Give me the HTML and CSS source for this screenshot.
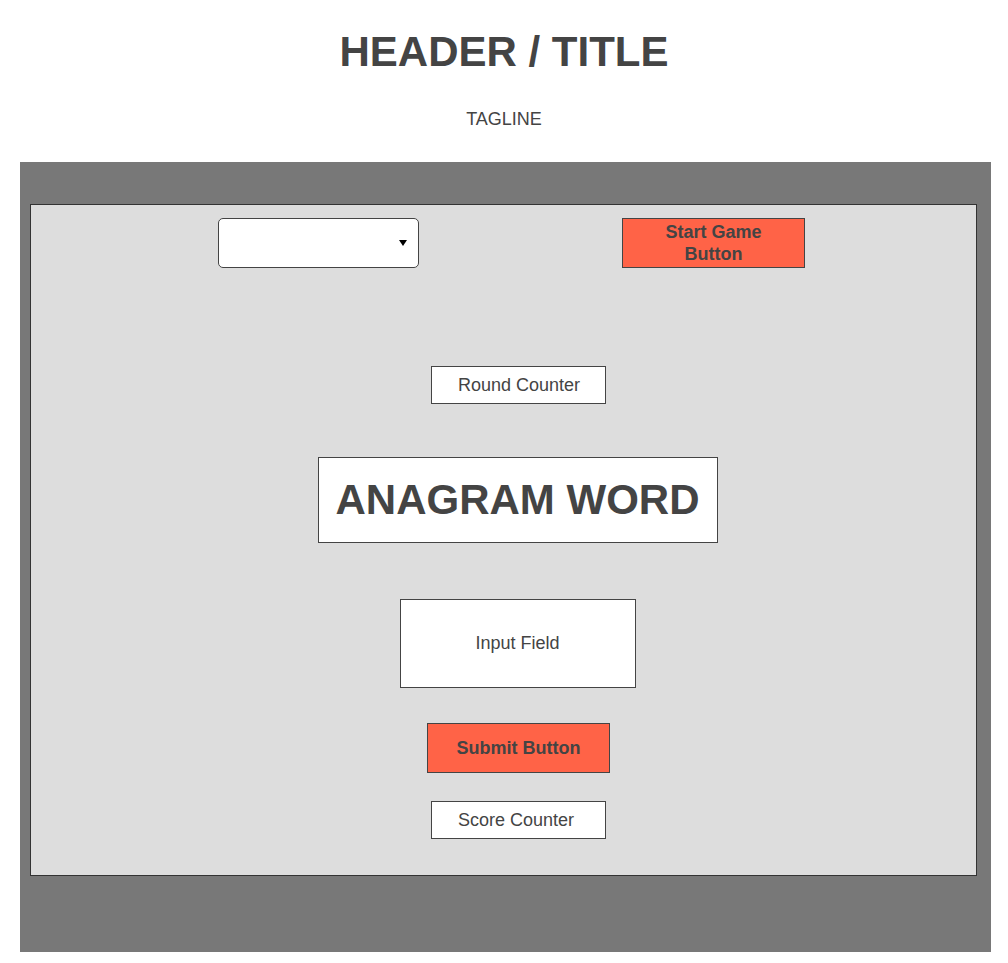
FILE: index.html
```html
<!DOCTYPE html>
<html lang="en">
<head>
<meta charset="utf-8">
<title>Anagram Game</title>
<link rel="stylesheet" href="styles.css">
</head>
<body>
<header class="page-header">
  <h1 class="title">HEADER / TITLE</h1>
  <p class="tagline">TAGLINE</p>
</header>
<main class="stage">
  <section class="game">
    <div class="controls">
      <div class="select-box"><span class="caret"></span></div>
      <button class="btn btn-start">Start Game Button</button>
    </div>
    <div class="play">
      <div class="counter counter-round">Round Counter</div>
      <div class="word">ANAGRAM WORD</div>
      <div class="input-field">Input Field</div>
      <button class="btn btn-submit">Submit Button</button>
      <div class="counter counter-score">Score Counter</div>
    </div>
  </section>
</main>
</body>
</html>
```

FILE: styles.css
```css
* { box-sizing: border-box; }
html, body { margin: 0; padding: 0; background: #fff; }
body {
  font-family: "Liberation Sans", Arial, sans-serif;
  color: #444;
  width: 1008px;
}
.page-header {
  display: flex;
  flex-direction: column;
  align-items: center;
  padding-top: 28px;
}
.title {
  margin: 0;
  font-size: 42px;
  line-height: 48px;
  font-weight: bold;
  color: #444;
}
.tagline {
  margin: 33px 0 0;
  font-size: 18px;
  line-height: 20px;
  color: #444;
}
.stage {
  margin: 33px 17px 0 20px;
  height: 790px;
  background: #787878;
  padding: 42px 14px 0 10px;
}
.game {
  height: 672px;
  background: #dddddd;
  border: 1px solid #333;
  display: flex;
  flex-direction: column;
}
.controls {
  display: flex;
  align-items: center;
  padding: 13px 0 0 187px;
  gap: 203px;
}
.select-box {
  width: 201px;
  height: 50px;
  background: #fff;
  border: 1px solid #444;
  border-radius: 5px;
  display: flex;
  align-items: center;
  justify-content: flex-end;
  padding-right: 11px;
}
.caret {
  width: 0;
  height: 0;
  border-left: 4px solid transparent;
  border-right: 4px solid transparent;
  border-top: 6px solid #000;
  margin-top: 0;
}
.btn {
  font-family: "Liberation Sans", Arial, sans-serif;
  font-weight: bold;
  font-size: 18px;
  line-height: 22px;
  color: #444;
  background: #ff6347;
  border: 1px solid #444;
  width: 183px;
  height: 50px;
  padding: 0 14px;
  margin: 0;
  border-radius: 0;
}
.play {
  display: flex;
  flex-direction: column;
  align-items: center;
  padding-left: 30px;
}
.counter {
  width: 175px;
  height: 38px;
  background: #fff;
  border: 1px solid #444;
  font-size: 18px;
  display: flex;
  align-items: center;
  justify-content: flex-start;
  padding-left: 26px;
}
.counter-round { margin-top: 98px; }
.word {
  margin: 53px 2px 0 0;
  width: 400px;
  height: 86px;
  background: #fff;
  border: 1px solid #444;
  font-size: 42px;
  font-weight: bold;
  display: flex;
  align-items: center;
  justify-content: center;
}
.input-field {
  margin: 56px 2px 0 0;
  width: 236px;
  height: 89px;
  background: #fff;
  border: 1px solid #444;
  font-size: 18px;
  display: flex;
  align-items: center;
  justify-content: center;
}
.btn-submit { margin-top: 35px; }
.counter-score { margin-top: 28px; }
```
